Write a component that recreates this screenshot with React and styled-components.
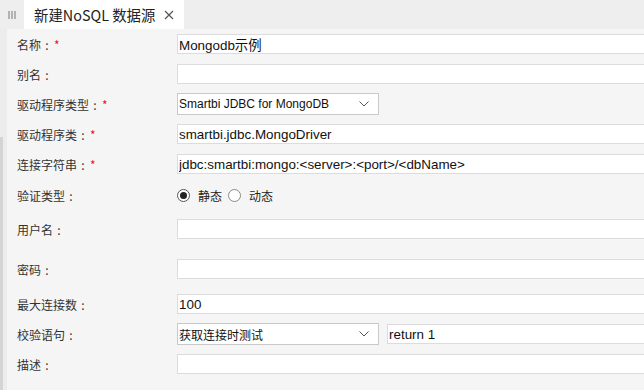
import React from 'react';
import styled, { createGlobalStyle } from 'styled-components';

const GlobalStyle = createGlobalStyle`
    html, body {
        margin: 0;
        padding: 0;
        background: #f5f5f5;
        overflow: hidden;
    }
    * {
        box-sizing: border-box;
    }
`

const Page = styled.div`
    width: 100vw;
    height: 100vh;
    display: flex;
    flex-direction: column;
    font-family: "Noto Sans CJK SC", "Liberation Sans", sans-serif;
    color: #333;
`

const TabBar = styled.div`
    height: 29px;
    flex: 0 0 29px;
    background: #eeeeee;
    display: flex;
    align-items: stretch;
`

const Grip = styled.div`
    width: 24px;
    display: flex;
    align-items: flex-start;
    justify-content: center;
    padding-top: 11px;
`

const Tab = styled.div`
    width: 160px;
    background: #fff;
    display: flex;
    align-items: center;
    padding-left: 10px;
    font-size: 14.4px;
    color: #222;
    gap: 9px;
    white-space: nowrap;
`

const CloseIcon = styled.svg`
    width: 10px;
    height: 10px;
    margin-top: 1px;
`

const Body = styled.div`
    flex: 1;
    display: flex;
    min-height: 0;
`

const Side = styled.div`
    width: 7px;
    flex: 0 0 7px;
    background: #ececec;
    display: flex;
    flex-direction: column;
`

const SideSpacer = styled.div`
    height: 108px;
`

const SideStrip = styled.div`
    flex: 1;
    width: 3px;
    background: #d4d4d4;
`

const Form = styled.div`
    flex: 1;
    background: #f5f5f5;
    padding-left: 10px;
    display: flex;
    flex-direction: column;
    overflow: hidden;
`

const Row = styled.div`
    display: flex;
    align-items: center;
    margin-top: ${p => p.$mt}px;
    min-height: ${p => p.$h || 20}px;
`

const Label = styled.div`
    width: 160px;
    flex: 0 0 160px;
    font-size: 12px;
    color: #333;
    white-space: nowrap;
    display: flex;
    align-items: center;
`

const Colon = styled.span`
    display: inline-block;
    width: 12px;
    text-align: center;
`

const Req = styled.span`
    color: #e8141b;
    margin-left: 1px;
`

const Field = styled.div`
    display: flex;
    align-items: center;
    gap: 8px;
`

const TextInput = styled.input`
    width: ${p => p.$w || 480}px;
    height: 20px;
    border: 1px solid #dcdcdc;
    background: #fff;
    padding: 0 1px;
    margin: 0;
    font-family: "Liberation Sans", "Noto Sans CJK SC", sans-serif;
    font-size: 13.4px;
    color: #111;
    outline: none;
`

const SelectBox = styled.div`
    width: 202px;
    height: 22px;
    border: 1px solid #c9c9c9;
    background: #fff;
    display: flex;
    align-items: center;
    justify-content: space-between;
    padding: 0 9px 0 1px;
    font-family: ${p => p.$cjk ? '"Noto Sans CJK SC", sans-serif' : '"Liberation Sans", "Noto Sans CJK SC", sans-serif'};
    font-size: 12px;
    color: #111;
    white-space: nowrap;
`

const Chevron = styled.svg`
    width: 10px;
    height: 6px;
`

const RadioGroup = styled.div`
    display: flex;
    align-items: center;
    font-size: 12px;
    color: #222;
`

const RadioOption = styled.label`
    display: flex;
    align-items: center;
    gap: 8px;
    margin-right: 6px;
`

const RadioCircle = styled.span`
    width: 13px;
    height: 13px;
    border-radius: 50%;
    border: 1px solid ${p => p.$on ? '#555' : '#8a8a8a'};
    background: #fff;
    display: flex;
    align-items: center;
    justify-content: center;

    &::after {
        content: '';
        width: 7px;
        height: 7px;
        border-radius: 50%;
        background: ${p => p.$on ? '#222' : 'transparent'};
    }
`

const ChevronDown = () => (
    <Chevron viewBox="0 0 10 6">
        <path d="M0.5 0.5 L5 5 L9.5 0.5" fill="none" stroke="#555" strokeWidth="1" />
    </Chevron>
)

const Select = ({ value, cjk }) => (
    <SelectBox $cjk={cjk}>
        <span>{value}</span>
        <ChevronDown />
    </SelectBox>
)

const Radio = ({ on, children }) => (
    <RadioOption>
        <RadioCircle $on={on} />
        {children}
    </RadioOption>
)

// label text + centred colon + optional red star
const FieldLabel = ({ text, required }) => (
    <Label>
        <span>{text}</span>
        <Colon>:</Colon>
        {required && <Req>*</Req>}
    </Label>
)

export default function App() {
    return (
        <>
            <GlobalStyle />
            <Page>
                <TabBar>
                    <Grip>
                        <svg width="8" height="8" viewBox="0 0 8 8">
                            <path d="M1 0 V8 M4 0 V8 M7 0 V8" stroke="#777" strokeWidth="1" />
                        </svg>
                    </Grip>
                    <Tab>
                        <span>新建NoSQL 数据源</span>
                        <CloseIcon viewBox="0 0 10 10">
                            <path d="M1 1 L9 9 M9 1 L1 9" stroke="#555" strokeWidth="1.2" />
                        </CloseIcon>
                    </Tab>
                </TabBar>
                <Body>
                    <Side>
                        <SideSpacer />
                        <SideStrip />
                    </Side>
                    <Form>
                        <Row $mt={5}>
                            <FieldLabel text="名称" required />
                            <Field><TextInput readOnly defaultValue="Mongodb示例" /></Field>
                        </Row>
                        <Row $mt={10}>
                            <FieldLabel text="别名" />
                            <Field><TextInput readOnly defaultValue="" /></Field>
                        </Row>
                        <Row $mt={9} $h={22}>
                            <FieldLabel text="驱动程序类型" required />
                            <Field><Select value="Smartbi JDBC for MongoDB" /></Field>
                        </Row>
                        <Row $mt={9}>
                            <FieldLabel text="驱动程序类" required />
                            <Field><TextInput readOnly defaultValue="smartbi.jdbc.MongoDriver" /></Field>
                        </Row>
                        <Row $mt={10}>
                            <FieldLabel text="连接字符串" required />
                            <Field><TextInput readOnly defaultValue="jdbc:smartbi:mongo:<server>:<port>/<dbName>" /></Field>
                        </Row>
                        <Row $mt={11}>
                            <FieldLabel text="验证类型" />
                            <RadioGroup>
                                <Radio on>静态</Radio>
                                <Radio>动态</Radio>
                            </RadioGroup>
                        </Row>
                        <Row $mt={14}>
                            <FieldLabel text="用户名" />
                            <Field><TextInput readOnly defaultValue="" /></Field>
                        </Row>
                        <Row $mt={20}>
                            <FieldLabel text="密码" />
                            <Field><TextInput readOnly type="password" defaultValue="" /></Field>
                        </Row>
                        <Row $mt={15}>
                            <FieldLabel text="最大连接数" />
                            <Field><TextInput readOnly defaultValue="100" /></Field>
                        </Row>
                        <Row $mt={9} $h={22}>
                            <FieldLabel text="校验语句" />
                            <Field>
                                <Select value="获取连接时测试" cjk />
                                <TextInput $w={270} readOnly defaultValue="return 1" />
                            </Field>
                        </Row>
                        <Row $mt={9}>
                            <FieldLabel text="描述" />
                            <Field><TextInput readOnly defaultValue="" /></Field>
                        </Row>
                    </Form>
                </Body>
            </Page>
        </>
    );
}
